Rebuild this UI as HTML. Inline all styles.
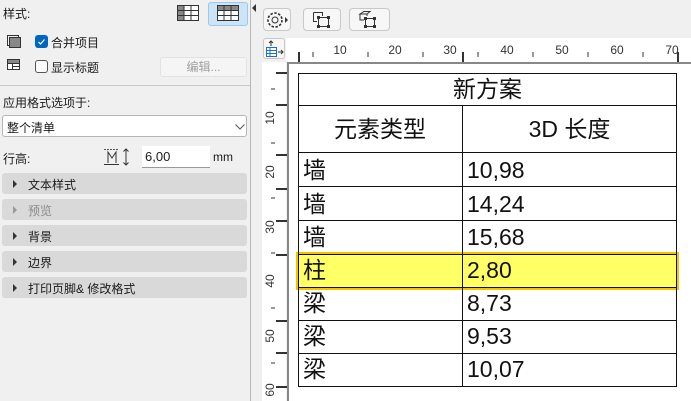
<!DOCTYPE html>
<html><head><meta charset="utf-8"><style>
*{margin:0;padding:0;box-sizing:border-box}
body{width:691px;height:401px;overflow:hidden;background:#f0f0f0;font-family:"Liberation Sans","Noto Sans CJK SC",sans-serif;font-size:12px;color:#1a1a1a;position:relative}
.a{position:absolute}
.bar{position:absolute;left:2px;width:245px;height:21px;background:#d9d9d9;border-radius:3px}
.bar span{position:absolute;left:26px;top:3px}
.bar i{position:absolute;left:11px;top:7px;width:0;height:0;border-left:4px solid #333;border-top:4px solid transparent;border-bottom:4px solid transparent}
.tb{position:absolute;top:8px;height:23px;background:#f7f7f7;border:1px solid #c8c8c8;border-radius:4px}
.h{position:absolute;left:298px;width:379px;height:1px;background:#111}
.c{position:absolute;font-size:23px;color:#111;line-height:30px}
</style></head><body>
<!-- left panel -->
<div class="a" style="left:3px;top:5px">样式:</div>
<svg class="a" style="left:177px;top:5px" width="22" height="16"><rect x="0.5" y="0.5" width="21" height="15" fill="#fff" stroke="#333"/><rect x="1" y="1" width="6" height="14" fill="#888"/><path d="M7 1V15M14 1V15M1 5.5H21M1 10.5H21" stroke="#333"/></svg>
<div class="a" style="left:208px;top:2px;width:40px;height:24px;background:#cce4f7;border:1px solid #99c9ef;border-radius:3px"></div>
<svg class="a" style="left:217px;top:5px" width="22" height="16"><rect x="0.5" y="0.5" width="21" height="15" fill="#fff" stroke="#333"/><rect x="1" y="1" width="20" height="4.5" fill="#888"/><path d="M7 1V15M14 1V15M1 5.5H21M1 10.5H21" stroke="#333"/></svg>
<svg class="a" style="left:6px;top:34px" width="16" height="16"><rect x="1.5" y="1.5" width="11" height="10" fill="none" stroke="#333"/><rect x="3.5" y="3.5" width="11" height="10" fill="#888" stroke="#333"/></svg>
<div class="a" style="left:35px;top:35px;width:13px;height:13px;background:#0067c0;border-radius:3px"></div>
<svg class="a" style="left:35px;top:35px" width="13" height="13"><path d="M3.5 7L5.5 9L9.5 4.5" stroke="#fff" fill="none" stroke-width="1.2"/></svg>
<div class="a" style="left:51px;top:34px">合并项目</div>
<svg class="a" style="left:6px;top:58px" width="16" height="16"><rect x="1.5" y="1.5" width="12" height="10" fill="#fff" stroke="#333"/><rect x="2" y="2" width="11" height="3" fill="#888"/><path d="M1.5 5.5H13.5M6.5 5.5V11.5M6.5 8.5H13.5" stroke="#333"/></svg>
<div class="a" style="left:35px;top:60px;width:13px;height:13px;border:1px solid #555;border-radius:3px;background:#fbfbfb"></div>
<div class="a" style="left:51px;top:59px">显示标题</div>
<div class="a" style="left:160px;top:57px;width:87px;height:20px;background:#f5f5f5;border:1px solid #e2e2e2;border-radius:3px;color:#a0a0a0;text-align:center;line-height:18px">编辑...</div>
<div class="a" style="left:0;top:85px;width:250px;height:1px;background:#c8c8c8"></div>
<div class="a" style="left:3px;top:94px">应用格式选项于:</div>
<div class="a" style="left:2px;top:115px;width:245px;height:22px;background:#fff;border:1px solid #b5b5b5;border-radius:3px"><span class="a" style="left:4px;top:3px">整个清单</span>
<svg class="a" style="left:232px;top:8px" width="10" height="6"><path d="M0.5 0.5L5 5L9.5 0.5" stroke="#555" fill="none"/></svg></div>
<div class="a" style="left:3px;top:150px">行高:</div>
<svg class="a" style="left:103px;top:146px" width="28" height="22"><path d="M1 3.5H16" stroke="#555" stroke-dasharray="2 1"/><path d="M5 17V6L9 12L13 6V17" stroke="#333" fill="none"/><path d="M1 18.5H16" stroke="#333"/><path d="M23 3V19M20.5 5.5L23 3L25.5 5.5M20.5 16.5L23 19L25.5 16.5" stroke="#333" fill="none"/></svg>
<div class="a" style="left:142px;top:146px;width:68px;height:22px;background:#fff;border-bottom:1px solid #999;padding:3px 3px;font-size:13px">6,00</div>
<div class="a" style="left:213px;top:150px">mm</div>
<div class="bar" style="top:173px"><i></i><span>文本样式</span></div>
<div class="bar" style="top:199px"><i style="border-left-color:#999"></i><span style="color:#8a8a8a">预览</span></div>
<div class="bar" style="top:225px"><i></i><span>背景</span></div>
<div class="bar" style="top:251px"><i></i><span>边界</span></div>
<div class="bar" style="top:277px"><i></i><span>打印页脚&amp; 修改格式</span></div>
<!-- divider -->
<div class="a" style="left:250px;top:0;width:1px;height:401px;background:#b8b8b8"></div>
<div class="a" style="left:252px;top:4px;width:0;height:0;border-right:4px solid #333;border-top:4px solid transparent;border-bottom:4px solid transparent"></div>
<!-- toolbar -->
<div class="tb" style="left:263px;width:28px"></div>
<svg class="a" style="left:265px;top:10px" width="26" height="20"><circle cx="10" cy="10" r="3" fill="none" stroke="#333"/><circle cx="10" cy="10" r="7" fill="none" stroke="#333" stroke-width="1.6" stroke-dasharray="2.5 1.5"/><path d="M20 7L23 10L20 13Z" fill="#333"/></svg>
<div class="tb" style="left:303px;width:38px"></div>
<svg class="a" style="left:312px;top:11px" width="22" height="18"><path d="M1.5 1.5H10.5V5M1.5 1.5V10.5H5" stroke="#333" fill="none"/><rect x="6.5" y="6.5" width="10" height="9" fill="none" stroke="#333"/><rect x="5" y="5" width="3" height="3" fill="#333"/><rect x="15" y="5" width="3" height="3" fill="#333"/><rect x="5" y="14" width="3" height="3" fill="#333"/><rect x="15" y="14" width="3" height="3" fill="#333"/></svg>
<div class="tb" style="left:349px;width:41px"></div>
<svg class="a" style="left:358px;top:10px" width="22" height="20"><path d="M2 4L6 1.5H12L9 4ZM2 4V10H6M9 4V6" stroke="#333" fill="none"/><rect x="7.5" y="8.5" width="9" height="8" fill="none" stroke="#333"/><rect x="6" y="7" width="3" height="3" fill="#333"/><rect x="15" y="7" width="3" height="3" fill="#333"/><rect x="6" y="15" width="3" height="3" fill="#333"/><rect x="15" y="15" width="3" height="3" fill="#333"/></svg>
<!-- rulers -->
<div class="a" style="left:286px;top:38px;width:405px;height:24px;background:#fff"></div>
<div class="a" style="left:262px;top:62px;width:24px;height:339px;background:#fff"></div>
<div class="a" style="left:263px;top:38px;width:22px;height:21px;background:#f7f7f7;border:1px solid #c8c8c8;border-radius:3px"></div>
<svg class="a" style="left:265px;top:40px" width="20" height="18"><path d="M6 1V6M4 3L6 1L8 3" stroke="#333" fill="none"/><rect x="1.5" y="7.5" width="10" height="9" fill="#fff" stroke="#1a6fd0"/><path d="M1.5 10.5H11.5M1.5 13.5H11.5M5 7.5V16.5" stroke="#1a6fd0"/><path d="M13 12H18M16 10L18 12L16 14" stroke="#333" fill="none"/></svg>
<svg class="a" style="left:286px;top:38px" width="405" height="24">
<g stroke="#333"><path d="M13 14V24M177 14V24M392 14V24" stroke-width="2"/>
<path d="M27 14V19M82 14V19M137 14V19M192 14V19M247 14V19M302 14V19M357 14V19"/></g>
<g font-size="12" fill="#333" text-anchor="middle" font-family="Liberation Sans"><text x="54" y="16">10</text><text x="109" y="16">20</text><text x="164" y="16">30</text><text x="221" y="16">40</text><text x="276" y="16">50</text><text x="331" y="16">60</text><text x="386" y="16">70</text></g></svg>
<svg class="a" style="left:262px;top:62px" width="26" height="339">
<g stroke="#333"><path d="M14 11H25M14 43H25M14 93H25M14 127H25M14 159H25M14 193H25M14 259H25M14 291H25M14 325H25" stroke-width="2"/>
<path d="M9 27H13M9 81H13M9 136H13M9 191H13M9 246H13M9 301H13"/></g>
<g font-size="12" fill="#333" text-anchor="middle" font-family="Liberation Sans"><text transform="translate(12 56) rotate(-90)">10</text><text transform="translate(12 110) rotate(-90)">20</text><text transform="translate(12 165) rotate(-90)">30</text><text transform="translate(12 219) rotate(-90)">40</text><text transform="translate(12 274) rotate(-90)">50</text><text transform="translate(12 328) rotate(-90)">60</text></g></svg>
<!-- page -->
<div class="a" style="left:287px;top:62px;width:404px;height:339px;background:#fff;border-left:2px solid #888;border-top:2px solid #888"></div>
<div class="a" style="left:296px;top:252px;width:383px;height:38px;background:#ffff66;border:2px solid #f5c400"></div>
<!-- table lines -->
<div class="h" style="top:73px"></div><div class="h" style="top:105px"></div><div class="h" style="top:152px"></div>
<div class="h" style="top:186px"></div><div class="h" style="top:220px"></div><div class="h" style="top:254px"></div>
<div class="h" style="top:287px"></div><div class="h" style="top:320px"></div><div class="h" style="top:353px"></div><div class="h" style="top:386px"></div>
<div class="a" style="left:298px;top:73px;width:1px;height:314px;background:#111"></div>
<div class="a" style="left:676px;top:73px;width:1px;height:314px;background:#111"></div>
<div class="a" style="left:462px;top:105px;width:1px;height:282px;background:#111"></div>
<div class="c" style="left:298px;width:379px;top:74px;text-align:center">新方案</div>
<div class="c" style="left:298px;width:164px;top:114px;text-align:center">元素类型</div>
<div class="c" style="left:462px;width:215px;top:114px;text-align:center">3D 长度</div>
<div class="c" style="left:303px;top:155px">墙</div><div class="c" style="left:467px;top:155px">10,98</div>
<div class="c" style="left:303px;top:189px">墙</div><div class="c" style="left:467px;top:189px">14,24</div>
<div class="c" style="left:303px;top:222px">墙</div><div class="c" style="left:467px;top:222px">15,68</div>
<div class="c" style="left:303px;top:255px">柱</div><div class="c" style="left:467px;top:255px">2,80</div>
<div class="c" style="left:303px;top:288px">梁</div><div class="c" style="left:467px;top:288px">8,73</div>
<div class="c" style="left:303px;top:321px">梁</div><div class="c" style="left:467px;top:321px">9,53</div>
<div class="c" style="left:303px;top:354px">梁</div><div class="c" style="left:467px;top:354px">10,07</div>
</body></html>
